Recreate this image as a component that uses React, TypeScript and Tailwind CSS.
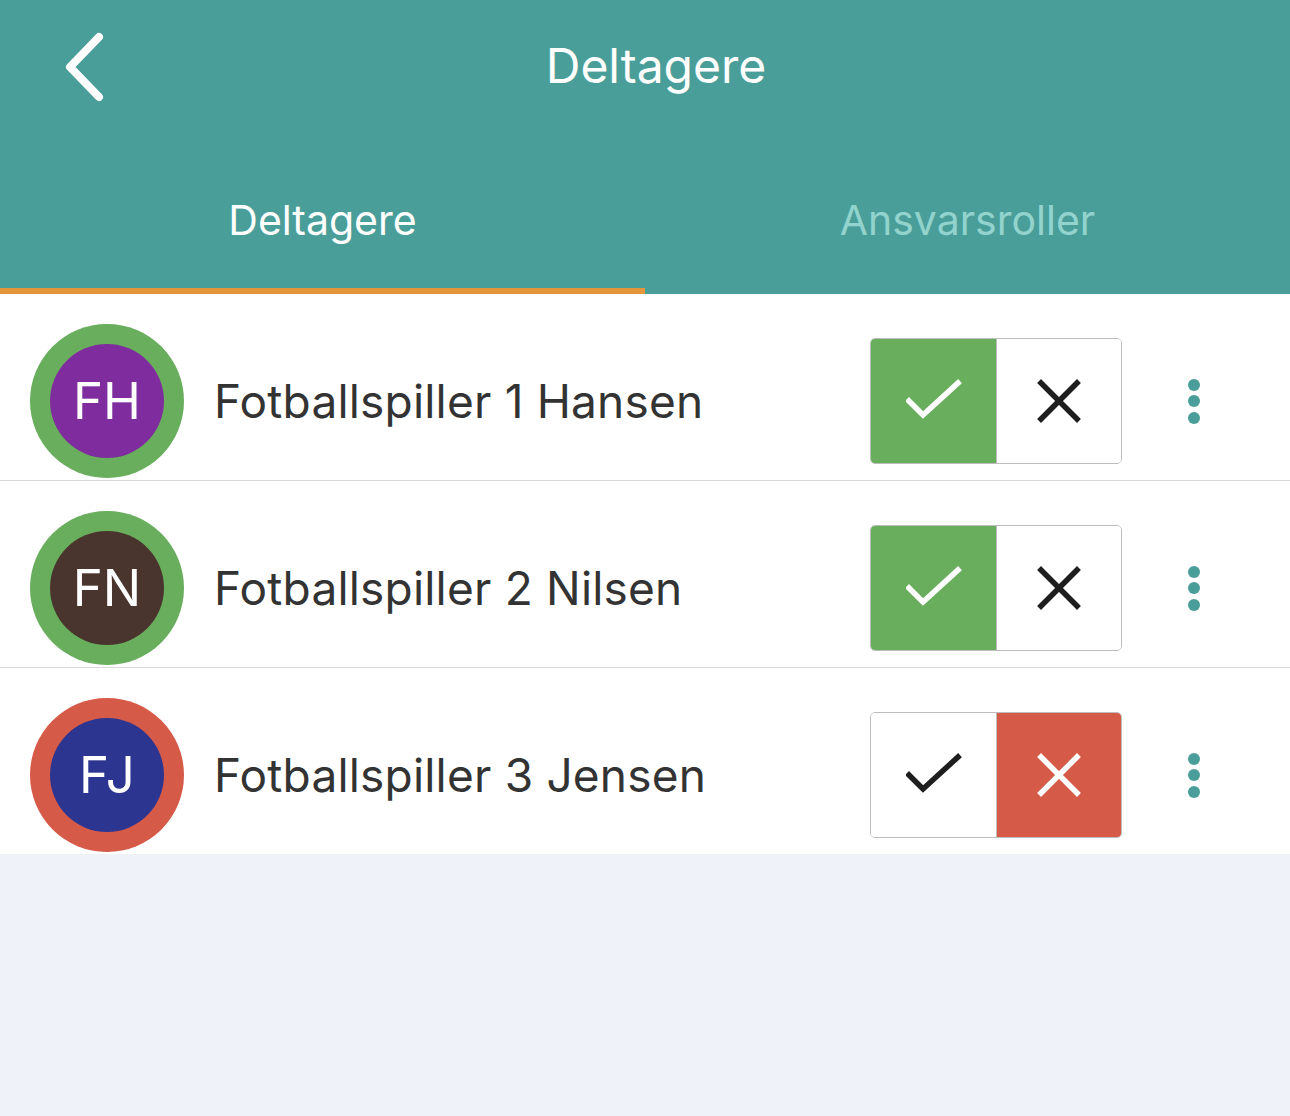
import { Fragment } from 'react';

type Player = {
    initials: string;
    name: string;
    color: string;
    going: boolean;
};

const players: Player[] = [
    { initials: 'FH', name: 'Fotballspiller 1 Hansen', color: 'bg-[#7f2c9f]', going: true },
    { initials: 'FN', name: 'Fotballspiller 2 Nilsen', color: 'bg-[#4a342e]', going: true },
    { initials: 'FJ', name: 'Fotballspiller 3 Jensen', color: 'bg-[#2c3590]', going: false },
];

const Check = () => (
    <svg width="56" height="44" viewBox="0 0 56 44" fill="none">
        <path d="M3 22 L17 36 L52 4" stroke="currentColor" strokeWidth="5.5" strokeLinecap="square" />
    </svg>
);

const Cross = () => (
    <svg width="44" height="44" viewBox="0 0 44 44" fill="none">
        <path d="M4 4 L40 40 M40 4 L4 40" stroke="currentColor" strokeWidth="5.5" strokeLinecap="square" />
    </svg>
);

function Row({ p }: { p: Player }) {
    return (
        <div className="flex items-center h-[186px] pt-[28px] pr-[90px] bg-white">
            <div
                className={`ml-[30px] w-[154px] h-[154px] rounded-full flex items-center justify-center ${
                    p.going ? 'bg-[#68ae5d]' : 'bg-[#d65a48]'
                }`}
            >
                <div
                    className={`w-[114px] h-[114px] rounded-full flex items-center justify-center text-white text-[51px] ${p.color}`}
                >
                    {p.initials}
                </div>
            </div>
            <div className="ml-[30px] flex-1 text-[46px] text-[#333333] tracking-[0.2px]">{p.name}</div>
            <div className="flex w-[252px] h-[126px] rounded-[5px] border border-[#bdbdbd] overflow-hidden">
                <div
                    className={`w-[125px] flex items-center justify-center ${
                        p.going ? 'bg-[#68ae5d] text-white' : 'bg-white text-[#1e1e1e]'
                    }`}
                >
                    <Check />
                </div>
                <div
                    className={`flex-1 flex items-center justify-center border-l border-[#bdbdbd] ${
                        p.going ? 'bg-white text-[#1e1e1e]' : 'bg-[#d65a48] text-white'
                    }`}
                >
                    <Cross />
                </div>
            </div>
            <div className="ml-[66px] w-[12px] flex flex-col items-center gap-[4.5px]">
                <span className="block w-[12px] h-[12px] rounded-full bg-[#4a9e9a]" />
                <span className="block w-[12px] h-[12px] rounded-full bg-[#4a9e9a]" />
                <span className="block w-[12px] h-[12px] rounded-full bg-[#4a9e9a]" />
            </div>
        </div>
    );
}

export default function App() {
    return (
        <div className="w-[1290px] h-[1116px] bg-[#eff2f9] font-['Inter','Roboto',sans-serif]">
            <div className="bg-[#4a9e9a] h-[294px] flex flex-col">
                <div className="relative h-[134px] flex items-center justify-center">
                    <svg
                        width="44"
                        height="72"
                        viewBox="0 0 44 72"
                        fill="none"
                        className="absolute left-[62px] top-[31px]"
                    >
                        <path
                            d="M37 6 L8 36 L37 66"
                            stroke="white"
                            strokeWidth="8"
                            strokeLinecap="round"
                            strokeLinejoin="round"
                        />
                    </svg>
                    <h1 className="text-white text-[48px] pl-[22px] pb-[2px]">Deltagere</h1>
                </div>
                <div className="flex flex-1">
                    <div className="w-[645px] flex flex-col">
                        <div className="flex-1 flex items-center justify-center text-white text-[41px] pt-[20px]">
                            Deltagere
                        </div>
                        <div className="h-[6px] bg-[#e4963a]" />
                    </div>
                    <div className="flex-1 flex items-center justify-center text-[#93d3cd] text-[41px] pt-[14px]">
                        Ansvarsroller
                    </div>
                </div>
            </div>
            {players.map((p, i) => (
                <Fragment key={i}>
                    {i > 0 && <div className="h-px bg-[#d8d8d8]" />}
                    <Row p={p} />
                </Fragment>
            ))}
        </div>
    );
}
